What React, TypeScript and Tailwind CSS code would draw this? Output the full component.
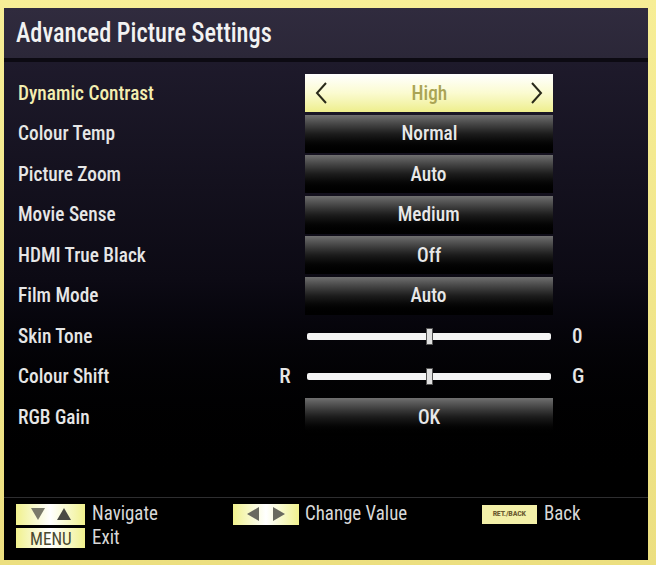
import React from "react";

const font = { fontFamily: '"Liberation Sans Narrow", "Roboto Condensed", Roboto, "Liberation Sans", sans-serif' };

type Row = { label: string; kind: "button" | "active" | "slider"; value?: string; left?: string; right?: string };

const rows: Row[] = [
  { label: "Dynamic Contrast", kind: "active", value: "High" },
  { label: "Colour Temp", kind: "button", value: "Normal" },
  { label: "Picture Zoom", kind: "button", value: "Auto" },
  { label: "Movie Sense", kind: "button", value: "Medium" },
  { label: "HDMI True Black", kind: "button", value: "Off" },
  { label: "Film Mode", kind: "button", value: "Auto" },
  { label: "Skin Tone", kind: "slider", right: "0" },
  { label: "Colour Shift", kind: "slider", left: "R", right: "G" },
  { label: "RGB Gain", kind: "button", value: "OK" },
];

function Control({ row }: { row: Row }) {
  if (row.kind === "active") {
    return (
      <div className="w-[248px] h-[38px] flex items-center justify-between px-[8px] bg-gradient-to-b from-[#ffffff] via-[#fbfbd0] to-[#eeee8c]">
        <svg width="16" height="26" viewBox="0 0 16 26"><path d="M13 3 L4 13 L13 23" fill="none" stroke="#2a2a1a" strokeWidth="2" /></svg>
        <span className="inline-block scale-x-[0.92] text-[21px] text-[#aaa454] font-medium">{row.value}</span>
        <svg width="16" height="26" viewBox="0 0 16 26"><path d="M3 3 L12 13 L3 23" fill="none" stroke="#2a2a1a" strokeWidth="2" /></svg>
      </div>
    );
  }
  if (row.kind === "button") {
    return (
      <div className="w-[248px] h-[38px] flex items-center justify-center bg-gradient-to-b from-[#707070] via-[#1c1c1c] to-[#000000]">
        <span className="inline-block scale-x-[0.92] text-[21px] text-[#e8e8e8] font-medium">{row.value}</span>
      </div>
    );
  }
  return (
    <div className="w-[248px] h-[38px] flex items-center px-[2px]">
      <div className="relative w-full h-[7px] bg-[#f4f4f4] rounded-[2px]">
        <div className="absolute left-[119px] top-[-5px] w-[7px] h-[17px] bg-[#e0e0e0] border border-[#555]" />
      </div>
    </div>
  );
}

export default function App() {
  return (
    <div className="w-[656px] h-[565px] bg-gradient-to-b from-[#f7ee96] to-[#ecdf80] pt-[8px] pl-[4px] pr-[8px] pb-[5px]" style={font}>
      <div className="w-full h-full flex flex-col bg-black">
        <div className="h-[50px] bg-gradient-to-b from-[#302b3e] to-[#2b2738] flex items-center pl-[12px]">
          <span className="inline-block origin-left scale-x-[0.87] text-[28px] text-[#f2f2f2] font-medium">Advanced Picture Settings</span>
        </div>
        <div className="h-[4px] bg-[#0c0a12]" />
        <div className="flex-1 flex flex-col pt-[11px] bg-gradient-to-b from-[#1e1a2b] via-[#0c0a14] to-[#000000]">
          {rows.map((r, i) => (
            <div key={i} className="h-[40.5px] flex items-center pl-[14px]">
              <div className="w-[255px]">
                <span className={`inline-block origin-left scale-x-[0.92] text-[21px] font-medium ${r.kind === "active" ? "text-[#f3eeb0]" : "text-[#e6e6e6]"}`}>{r.label}</span>
              </div>
              <div className="w-[24px] text-center text-[21px] font-medium text-[#e6e6e6]">{r.left ?? ""}</div>
              <div className="ml-[8px]">
                <Control row={r} />
              </div>
              <div className="ml-[19px] text-[21px] font-medium text-[#e6e6e6]">{r.right ?? ""}</div>
            </div>
          ))}
        </div>
        <div className="h-[1px] bg-[#2e2e30]" />
        <div className="h-[62px] bg-black flex flex-col pl-[12px] pt-[5px]">
          <div className="flex items-center h-[22px]">
            <div className="w-[69px] h-[21px] bg-gradient-to-r from-[#f1f18c] via-[#ffffff] to-[#f1f18c] flex items-center justify-center gap-[10px]">
              <svg width="16" height="14" viewBox="0 0 16 14"><path d="M1 1 H15 L8 13 Z" fill="#7a7a6a" /></svg>
              <svg width="16" height="14" viewBox="0 0 16 14"><path d="M1 13 H15 L8 1 Z" fill="#4a4a44" /></svg>
            </div>
            <span className="ml-[7px] inline-block origin-left scale-x-[0.9] text-[21px] text-[#d8d8d8]">Navigate</span>
            <div className="ml-[68px] w-[66px] h-[21px] bg-gradient-to-r from-[#f1f18c] via-[#ffffff] to-[#f1f18c] flex items-center justify-center gap-[12px]">
              <svg width="14" height="16" viewBox="0 0 14 16"><path d="M13 1 V15 L1 8 Z" fill="#6a6a60" /></svg>
              <svg width="14" height="16" viewBox="0 0 14 16"><path d="M1 1 V15 L13 8 Z" fill="#6a6a60" /></svg>
            </div>
            <span className="ml-[6px] inline-block origin-left scale-x-[0.9] text-[21px] text-[#d8d8d8]">Change Value</span>
            <div className="ml-[63px] w-[55px] h-[19px] bg-[#f3f0a8] flex items-center justify-center">
              <span className="text-[8px] font-bold text-[#6a5a30] tracking-tight">RET./BACK</span>
            </div>
            <span className="ml-[7px] inline-block origin-left scale-x-[0.9] text-[21px] text-[#d8d8d8]">Back</span>
          </div>
          <div className="flex items-center h-[22px] mt-[2px]">
            <div className="w-[69px] h-[20px] bg-gradient-to-r from-[#f1f18c] via-[#ffffff] to-[#f1f18c] flex items-center justify-center">
              <span className="inline-block scale-x-[0.95] text-[18px] text-[#4a4a30]">MENU</span>
            </div>
            <span className="ml-[7px] inline-block origin-left scale-x-[0.9] text-[21px] text-[#d8d8d8]">Exit</span>
          </div>
        </div>
      </div>
    </div>
  );
}
